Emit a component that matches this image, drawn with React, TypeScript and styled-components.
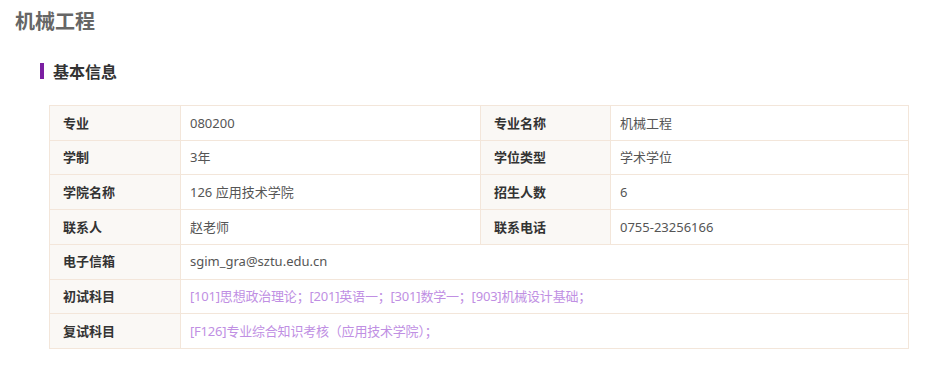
import React from 'react';
import styled, { createGlobalStyle } from 'styled-components';

const GlobalStyle = createGlobalStyle`
	html,
	body {
		margin: 0;
		padding: 0;
		background: #fff;
		font-family: 'Noto Sans', 'Noto Sans CJK SC', sans-serif;
	}
`;

interface Row {
	label: string;
	value: string;
	label2?: string;
	value2?: string;
	highlight?: boolean;
}

const rows: Row[] = [
	{ label: '专业', value: '080200', label2: '专业名称', value2: '机械工程' },
	{ label: '学制', value: '3年', label2: '学位类型', value2: '学术学位' },
	{ label: '学院名称', value: '126 应用技术学院', label2: '招生人数', value2: '6' },
	{ label: '联系人', value: '赵老师', label2: '联系电话', value2: '0755-23256166' },
	{ label: '电子信箱', value: 'sgim_gra@sztu.edu.cn' },
	{
		label: '初试科目',
		value: '[101]思想政治理论；[201]英语一；[301]数学一；[903]机械设计基础；',
		highlight: true,
	},
	{
		label: '复试科目',
		value: '[F126]专业综合知识考核（应用技术学院）；',
		highlight: true,
	},
];

function App() {
	return (
		<Page>
			<GlobalStyle />
			<Title>机械工程</Title>
			<Section>
				<SectionHeading>基本信息</SectionHeading>
				<InfoTable>
					<colgroup>
						<col style={{ width: 131 }} />
						<col style={{ width: 300 }} />
						<col style={{ width: 130 }} />
						<col />
					</colgroup>
					<tbody>
						{rows.map((row) => (
							<tr key={row.label}>
								<LabelCell>{row.label}</LabelCell>
								{row.label2 ? (
									<>
										<ValueCell>{row.value}</ValueCell>
										<LabelCell>{row.label2}</LabelCell>
										<ValueCell>{row.value2}</ValueCell>
									</>
								) : (
									<ValueCell colSpan={3} $highlight={row.highlight}>
										{row.value}
									</ValueCell>
								)}
							</tr>
						))}
					</tbody>
				</InfoTable>
			</Section>
		</Page>
	);
}

const Page = styled.div`
	padding: 8px 0 0 15px;
`;

const Title = styled.h2`
	margin: 0;
	font-size: 20px;
	line-height: 28px;
	font-weight: 700;
	color: #666;
`;

const Section = styled.div`
	padding-left: 25px;
	margin-top: 23px;
`;

const SectionHeading = styled.h3`
	margin: 0;
	display: flex;
	align-items: center;
	height: 24px;
	font-size: 16px;
	font-weight: 700;
	color: #333;

	&::before {
		content: '';
		display: block;
		width: 4px;
		height: 16px;
		margin-right: 9px;
		background: #7b1fa2;
	}
`;

const InfoTable = styled.table`
	margin: 22px 0 0 9px;
	width: 860px;
	table-layout: fixed;
	border-collapse: collapse;
	font-size: 13px;
	line-height: 18.7px;
`;

const LabelCell = styled.td`
	padding: 7.5px 12px 7.5px 13px;
	border: 1px solid #f3e6da;
	background: #faf8f5;
	color: #333;
	font-weight: 700;
`;

const ValueCell = styled.td<{ $highlight?: boolean }>`
	padding: 7.5px 10px 7.5px 9px;
	border: 1px solid #f3e6da;
	background: #fff;
	color: ${(props) => (props.$highlight ? '#c08fe3' : '#555')};
	letter-spacing: ${(props) => (props.$highlight ? '-0.2px' : '0')};
`;

export default App;
